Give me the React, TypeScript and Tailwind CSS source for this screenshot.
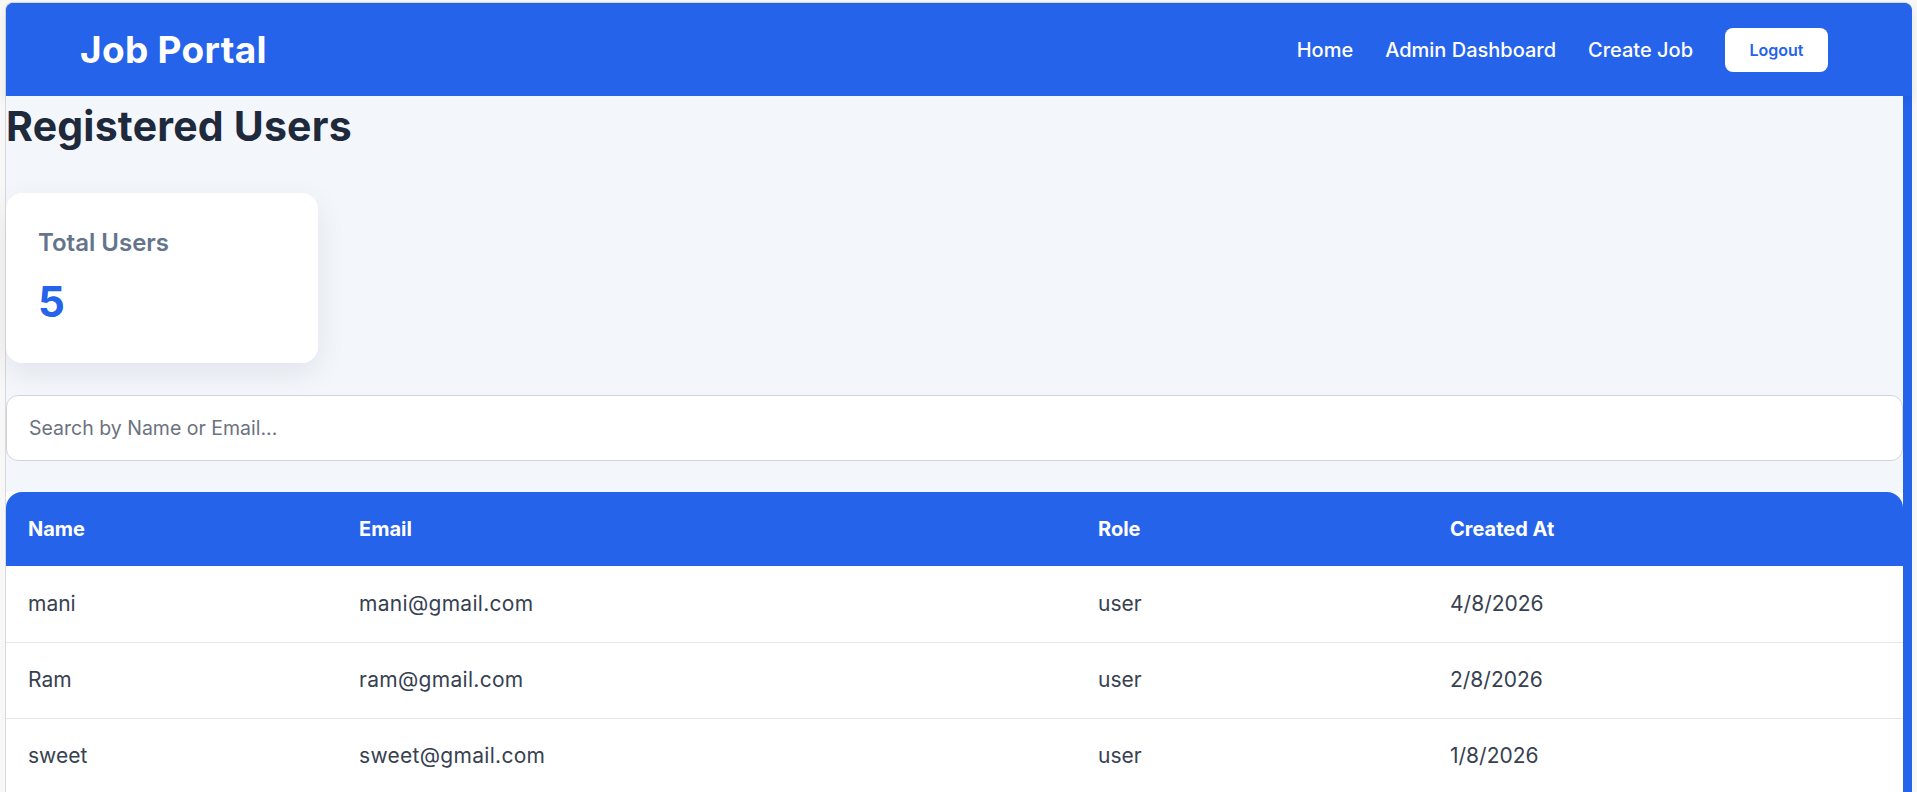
import React from "react";

const TOTAL_USERS = 5;

const users = [
  { name: "mani", email: "mani@gmail.com", role: "user", createdAt: "4/8/2026" },
  { name: "Ram", email: "ram@gmail.com", role: "user", createdAt: "2/8/2026" },
  { name: "sweet", email: "sweet@gmail.com", role: "user", createdAt: "1/8/2026" },
];

function Navbar() {
  return (
    <nav className="flex h-[93px] items-center justify-between rounded-t-lg bg-[#2563eb] pl-[74px] pr-[84px] shadow-[0_4px_10px_rgba(15,23,42,0.08)]">
      <h2 className="text-[37px] font-bold tracking-[0.3px] text-white">Job Portal</h2>
      <div className="flex items-center gap-[32px] text-[20px] font-medium text-white">
        <a href="#">Home</a>
        <a href="#">Admin Dashboard</a>
        <a href="#">Create Job</a>
        <button className="h-[44px] w-[103px] rounded-lg bg-white text-[16px] font-semibold text-[#2563eb]">
          Logout
        </button>
      </div>
    </nav>
  );
}

export default function App() {
  return (
    <div className="min-h-screen bg-[#f7f7f7] pl-[5px] pr-[5px] pt-[2px] font-['Inter',sans-serif]">
      <div className="rounded-t-lg border-l border-t border-[#d9d9d9] bg-[#2563eb]">
        <Navbar />

        {/* Users list */}
        <main className="mr-[9px] bg-[#f3f6fb]">
          <h1 className="pt-[5px] text-[41px] font-bold leading-[50px] tracking-[0.2px] text-[#1e293b]">
            Registered Users
          </h1>

          <div className="mt-[42px] h-[170px] w-[312px] rounded-2xl bg-white px-8 pt-[34px] shadow-[0_10px_30px_rgba(15,23,42,0.08)]">
            <h3 className="text-[24px] font-semibold leading-[32px] text-[#64748b]">Total Users</h3>
            <p className="mt-[18px] text-[42px] font-bold leading-[50px] text-[#2563eb]">{TOTAL_USERS}</p>
          </div>

          <input
            type="text"
            placeholder="Search by Name or Email..."
            className="mt-[32px] block h-[66px] w-full rounded-xl border border-[#d1d5db] bg-white px-[22px] text-[19.5px] text-[#374151] outline-none placeholder:text-[#6b7280]"
          />

          <table className="mt-[31px] w-full border-collapse bg-white text-left">
            <thead>
              <tr className="h-[74px] bg-[#2563eb] text-[20px] font-bold text-white">
                <th className="w-[331px] rounded-tl-2xl px-[22px]">Name</th>
                <th className="w-[739px] px-[22px]">Email</th>
                <th className="w-[352px] px-[22px]">Role</th>
                <th className="rounded-tr-2xl px-[22px]">Created At</th>
              </tr>
            </thead>
            <tbody className="text-[21px] text-[#374151]">
              {users.map((u) => (
                <tr key={u.email} className="h-[76px] border-b border-[#e5e7eb]">
                  <td className="px-[22px]">{u.name}</td>
                  <td className="px-[22px] tracking-[0.3px]">{u.email}</td>
                  <td className="px-[22px]">{u.role}</td>
                  <td className="px-[22px]">{u.createdAt}</td>
                </tr>
              ))}
            </tbody>
          </table>
        </main>
      </div>
    </div>
  );
}
